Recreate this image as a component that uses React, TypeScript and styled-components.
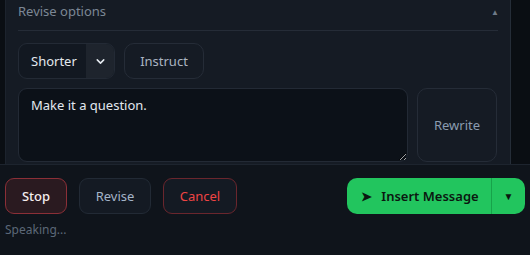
import React from "react";
import styled, { createGlobalStyle } from "styled-components";

const Global = createGlobalStyle`
  html, body { margin: 0; padding: 0; background: #0f141b; }
  body { font-family: "Noto Sans", "Open Sans", sans-serif; }
  * { box-sizing: border-box; }
`;

const Page = styled.div`
  width: 530px;
  height: 255px;
  display: flex;
  flex-direction: column;
  overflow: hidden;
`;

const ScrollArea = styled.div`
  height: 164px;
  flex: none;
  background: #0a0e13;
  padding: 0 19px 0 5px;
  overflow: hidden;
`;

const Panel = styled.section`
  background: #151b24;
  border-left: 1px solid #1c232d;
  border-right: 1px solid #252d38;
  padding: 0 12px 12px 12px;
  height: 100%;
`;

const Header = styled.div`
  display: flex;
  align-items: center;
  justify-content: space-between;
  height: 31px;
  padding-bottom: 8px;
  border-bottom: 1px solid #252c37;
  color: #7c8795;
  font-size: 13px;
`;

const Caret = styled.span`
  font-size: 8px;
  color: #6f7a89;
  margin-right: -1px;
`;

const Row = styled.div`
  display: flex;
  gap: 9px;
  margin-top: 12px;
`;

const SelectBox = styled.div`
  display: flex;
  width: 97px;
  height: 36px;
  border: 1px solid #232a35;
  border-radius: 9px;
  overflow: hidden;
  background: #121821;
`;

const SelectLabel = styled.div`
  flex: 1;
  display: flex;
  align-items: center;
  padding-left: 12px;
  color: #e3e8ee;
  font-size: 13px;
`;

const SelectArrow = styled.div`
  width: 28px;
  display: flex;
  align-items: center;
  justify-content: center;
  background: #1e242d;
  color: #e3e8ee;
`;

const GhostButton = styled.button<{ $w: number; $h: number; $color?: string }>`
  width: ${(p) => p.$w}px;
  height: ${(p) => p.$h}px;
  background: #151b24;
  border: 1px solid #252c37;
  border-radius: 10px;
  color: ${(p) => p.$color ?? "#aab4c1"};
  font-family: inherit;
  font-size: 13px;
  padding: 0;
  flex: none;
`;

const EditRow = styled.div`
  display: flex;
  gap: 9px;
  margin-top: 9px;
`;

const TextArea = styled.textarea`
  width: 390px;
  height: 74px;
  flex: none;
  background: #0c1118;
  border: 1px solid #232a35;
  border-radius: 9px;
  color: #e2e8ef;
  font-family: inherit;
  font-size: 13px;
  padding: 7px 12px;
  resize: vertical;
  outline: none;
`;

const BottomBar = styled.div`
  flex: 1;
  border-top: 1px solid #1d242e;
  background: #0f141b;
  padding: 13px 5px 0 5px;
`;

const Actions = styled.div`
  display: flex;
  align-items: center;
  gap: 12px;
`;

const Btn = styled.button<{ $w: number; $variant: "stop" | "plain" | "cancel" }>`
  width: ${(p) => p.$w}px;
  height: 36px;
  border-radius: 9px;
  font-family: inherit;
  font-size: 13px;
  font-weight: ${(p) => (p.$variant === "stop" ? 500 : 400)};
  padding: 0;
  border: 1px solid
    ${(p) => (p.$variant === "stop" ? "#8b2f37" : p.$variant === "cancel" ? "#6a262d" : "#222a35")};
  background: ${(p) => (p.$variant === "stop" ? "#2a1a20" : "#141a23")};
  color: ${(p) => (p.$variant === "stop" ? "#f5eeee" : p.$variant === "cancel" ? "#ef4444" : "#a4b4c8")};
`;

const Spacer = styled.div`
  flex: 1;
`;

const SplitButton = styled.div`
  display: flex;
  height: 36px;
  border-radius: 10px;
  overflow: hidden;
  background: #22c55e;
  color: #0b1710;
`;

const SplitMain = styled.button`
  width: 145px;
  border: none;
  border-right: 1px solid #17a34a;
  background: transparent;
  color: inherit;
  font-family: inherit;
  font-size: 13px;
  font-weight: 600;
  display: flex;
  align-items: center;
  justify-content: center;
  gap: 9px;
  padding: 0 0 0 2px;
`;

const SplitToggle = styled.button`
  width: 33px;
  border: none;
  background: transparent;
  color: inherit;
  font-size: 10px;
  padding: 0;
`;

const Status = styled.div`
  margin-top: 7px;
  color: #5c6878;
  font-size: 12px;
`;

export default function App() {
  return (
    <Page>
      <Global />
      <ScrollArea>
        <Panel>
          <Header>
            <span>Revise options</span>
            <Caret>▲</Caret>
          </Header>
          <Row>
            <SelectBox>
              <SelectLabel>Shorter</SelectLabel>
              <SelectArrow>
                <svg width="13" height="13" viewBox="0 0 24 24" fill="none" stroke="currentColor" strokeWidth="2.8" strokeLinecap="round" strokeLinejoin="round">
                  <path d="M6 9l6 6 6-6" />
                </svg>
              </SelectArrow>
            </SelectBox>
            <GhostButton $w={80} $h={36}>Instruct</GhostButton>
          </Row>
          <EditRow>
            <TextArea defaultValue="Make it a question." />
            <GhostButton $w={80} $h={74} $color="#8a9bb0">Rewrite</GhostButton>
          </EditRow>
        </Panel>
      </ScrollArea>
      <BottomBar>
        <Actions>
          <Btn $w={62} $variant="stop">Stop</Btn>
          <Btn $w={72} $variant="plain">Revise</Btn>
          <Btn $w={74} $variant="cancel">Cancel</Btn>
          <Spacer />
          <SplitButton>
            <SplitMain>
              <span>➤</span>
              <span>Insert Message</span>
            </SplitMain>
            <SplitToggle>▼</SplitToggle>
          </SplitButton>
        </Actions>
        <Status>Speaking...</Status>
      </BottomBar>
    </Page>
  );
}
